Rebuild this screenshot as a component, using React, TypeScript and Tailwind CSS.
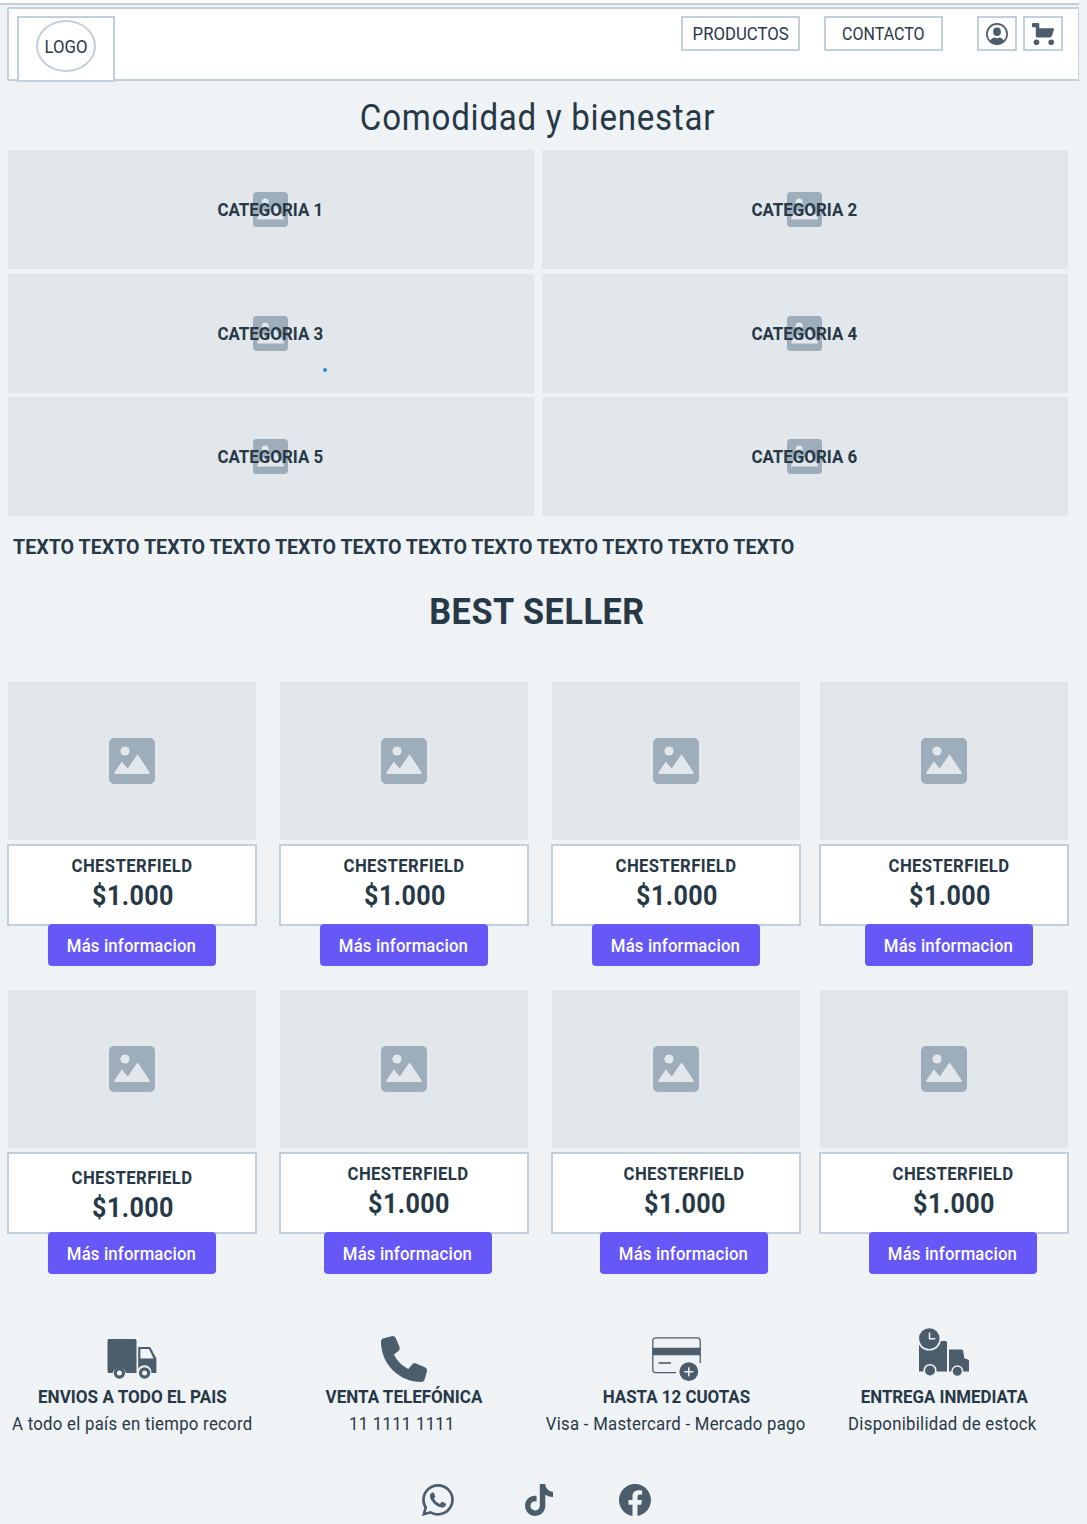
import type { ReactNode } from "react";
import { BsFacebook, BsWhatsapp } from "react-icons/bs";
import { FaPhone, FaTiktok } from "react-icons/fa6";

function PictureIcon({ className }: { className: string }) {
  return (
    <svg viewBox="0 0 46 46" className={className}>
      <rect width="46" height="46" rx="5" fill="#9dadba" />
      <circle cx="16" cy="13" r="4.6" fill="#e2e7eb" />
      <path d="M5.3 34.6 12.8 23.6 18.8 30.4 28.6 16.2 40.7 34.6 Q41 36 40 36 H6 Q5 36 5.3 34.6Z" fill="#e2e7eb" />
    </svg>
  );
}

function UserIcon() {
  return (
    <svg viewBox="0 0 22 22" className="size-[22px]">
      <circle cx="11" cy="11" r="10.1" fill="none" stroke="currentColor" strokeWidth="1.7" />
      <ellipse cx="11" cy="8.8" rx="3.9" ry="4.3" fill="currentColor" />
      <path d="M4 18.2 C5 15.6 7 14.8 8.4 14.6 Q11 16 13.6 14.6 C15 14.8 17 15.6 18 18.2 Q14.8 21.5 11 21.5 T4 18.2Z" fill="currentColor" />
    </svg>
  );
}

function CartIcon() {
  return (
    <svg viewBox="0 0 22 22" className="size-[22px]" fill="currentColor">
      <path d="M1 0 H6 Q7.3 0 7.3 1.5 V5.2 H21 Q22.2 5.2 22 6.4 L20 12.7 Q19.5 14.4 17.8 14.4 H5.4 Q3.8 14.4 3.8 12.8 V4.2 H1 Q0 4.2 0 3.2 V1 Q0 0 1 0Z" />
      <circle cx="4.5" cy="19.2" r="2.8" />
      <circle cx="19.2" cy="19.2" r="2.8" />
    </svg>
  );
}

function TruckIcon() {
  return (
    <svg viewBox="0 0 50 40" className="h-10 w-[50px]" fill="currentColor">
      <path d="M1.5 0 H28 Q29.5 0 29.5 1.5 V34 H19 A7 7 0 0 0 5.6 34 H2 Q.5 34 .5 32.5 V1.5 Q.5 0 1.5 0Z" />
      <path fillRule="evenodd" d="M31.2 8 H43.2 L49.4 19.5 V34 H44.4 A7 7 0 0 0 31.2 30Z M33.4 10 V19.4 H46.6 L42 10Z" />
      <circle cx="12.4" cy="34" r="4.1" fill="none" stroke="currentColor" strokeWidth="3.2" />
      <circle cx="37.6" cy="34" r="4.1" fill="none" stroke="currentColor" strokeWidth="3.2" />
    </svg>
  );
}

function CardIcon() {
  return (
    <svg viewBox="0 0 50 45" className="h-[45px] w-[50px]" fill="none" stroke="currentColor">
      <path d="M24 35.7 H4 Q.8 35.7 .8 32.5 V4 Q.8 .8 4 .8 H45 Q48.2 .8 48.2 4 V26" strokeWidth="1.3" />
      <path d="M.8 14.5 H48.2" strokeWidth="7.6" />
      <path d="M6.5 26 H19" strokeWidth="1.6" />
      <circle cx="36.8" cy="34.7" r="9.4" fill="currentColor" stroke="none" />
      <path d="M32.3 34.7 H41.3 M36.8 30.2 V39.2" stroke="#eff3f6" strokeWidth="1.5" />
    </svg>
  );
}

function FastTruckIcon() {
  return (
    <svg viewBox="0 0 50 48" className="h-12 w-[50px]" fill="currentColor">
      <path d="M0 15 H19 V13 H26.5 Q28 13 28 14.5 V43.5 H0Z" />
      <path d="M30 21.5 H42.5 Q44 21.5 44.2 23 L45.3 30.3 L49 31.6 Q50 32 50 33 V43.5 H30Z" />
      <circle cx="10.3" cy="10.8" r="11.8" fill="#eff3f6" />
      <circle cx="10.3" cy="10.6" r="10.3" />
      <path d="M10.5 4.5 V10.8 H16.3" fill="none" stroke="#eff3f6" strokeWidth="1.5" />
      <circle cx="11" cy="42.5" r="6.6" fill="#eff3f6" />
      <circle cx="11" cy="42.5" r="5" />
      <circle cx="38.3" cy="43.2" r="6" fill="#eff3f6" />
      <circle cx="38.3" cy="43.2" r="4.5" />
    </svg>
  );
}

function NavBox({ className, children }: { className: string; children: ReactNode }) {
  return (
    <div className={`flex h-[35px] shrink-0 items-center justify-center border-2 border-[#c3cfda] bg-white text-[#4b5d6b] ${className}`}>
      {children}
    </div>
  );
}

function Category({ n }: { n: number }) {
  return (
    <div className="grid h-[119px] place-items-center bg-[#e2e7eb] pr-px">
      <PictureIcon className="col-start-1 row-start-1 size-[35px]" />
      <span className="col-start-1 row-start-1 scale-x-[0.94] text-lg leading-[19px] font-bold whitespace-nowrap">CATEGORIA {n}</span>
    </div>
  );
}

type Shift = { text: string; button: string };

function Product({ shift }: { shift: Shift }) {
  return (
    <article className="w-[248px]">
      <div className="flex h-[158px] items-center justify-center bg-[#e2e7eb]">
        <PictureIcon className="size-[46px]" />
      </div>
      <div className="-mx-px mt-1 h-[82px] border-2 border-[#c3cfda] bg-white">
        <div className={`flex flex-col items-center ${shift.text}`}>
          <h3 className="scale-x-[0.93] text-lg leading-5 font-bold tracking-[0.4px]">CHESTERFIELD</h3>
          <p className="mt-[5px] scale-x-[0.93] text-[27px] leading-[30px] font-bold tracking-[0.45px]">$1.000</p>
        </div>
      </div>
      <button className={`relative -mt-0.5 block h-[42px] w-[168px] rounded-[4px] bg-[#6658f6] pt-0.5 pr-px text-lg font-medium text-white ${shift.button}`}>
        <span className="inline-block scale-x-[0.93] tracking-[0.17px] whitespace-nowrap">Más informacion</span>
      </button>
    </article>
  );
}

const firstRow: Shift[] = [
  { text: "pt-2.5 pl-px", button: "ml-10" },
  { text: "pt-2.5 pl-px", button: "ml-10" },
  { text: "pt-2.5 pl-px", button: "ml-10" },
  { text: "pt-2.5 pl-[11px]", button: "ml-[45px]" },
];

const secondRow: Shift[] = [
  { text: "pt-3.5 pl-px", button: "ml-10" },
  { text: "pt-2.5 pl-[9px]", button: "ml-11" },
  { text: "pt-2.5 pl-[17px]", button: "ml-12" },
  { text: "pt-2.5 pl-[19px]", button: "ml-[49px]" },
];

function ProductRow({ items }: { items: Shift[] }) {
  return (
    <div className="ml-2 grid grid-cols-[272px_272px_268px_248px]">
      {items.map((shift, i) => (
        <Product key={i} shift={shift} />
      ))}
    </div>
  );
}

function Benefit({ icon, title, detail, titleClass, detailClass }: { icon: ReactNode; title: string; detail: string; titleClass: string; detailClass: string }) {
  return (
    <div className="flex w-[248px] flex-col items-center">
      <div className="h-[59px] text-[#4b5d6b]">{icon}</div>
      <h3 className={`text-lg leading-5 font-bold whitespace-nowrap ${titleClass}`}>{title}</h3>
      <p className={`mt-[7px] scale-x-[0.93] text-lg leading-5 tracking-[0.3px] whitespace-nowrap ${detailClass}`}>{detail}</p>
    </div>
  );
}

export default function App() {
  return (
    <div className="h-[1524px] w-[1087px] overflow-hidden bg-[#eff3f6] font-['Roboto',sans-serif] text-[#273846]">
      <div className="h-[5px] w-[1079px] border-b-2 border-[#c3cfda] bg-white" />
      <header className="mt-0.5 ml-[7px] flex h-[74px] w-[1072px] items-start border-2 border-r border-[#c3cfda] bg-white pt-[7px] pl-2">
        <div className="h-[66px] w-[98px] shrink-0 border-2 border-[#c3cfda] bg-white pt-0.5 pl-[17px]">
          <div className="flex h-[52px] w-[60px] items-center justify-center rounded-[50%] border-2 border-[#c3cfda] pt-0.5 pl-px">
            <span className="scale-x-[0.93] text-lg">LOGO</span>
          </div>
        </div>
        <nav className="ml-[566px] flex">
          <NavBox className="w-[119px]">
            <span className="scale-x-[0.93] text-lg text-[#273846]">PRODUCTOS</span>
          </NavBox>
          <NavBox className="ml-6 w-[119px]">
            <span className="scale-x-[0.89] text-lg text-[#273846]">CONTACTO</span>
          </NavBox>
          <NavBox className="ml-[34px] w-10">
            <UserIcon />
          </NavBox>
          <NavBox className="ml-1.5 w-10">
            <CartIcon />
          </NavBox>
        </nav>
      </header>

      <h1 className="h-[69px] w-[1075px] scale-x-[0.92] pt-[5px] text-center text-4xl leading-[65px] tracking-[0.8px]">Comodidad y bienestar</h1>

      <section className="ml-2 grid w-[1060px] grid-cols-2 gap-x-2 gap-y-[4.5px]">
        {[1, 2, 3, 4, 5, 6].map((n) => (
          <div key={n} className="relative">
            <Category n={n} />
            {n === 3 && <i className="absolute top-[94px] left-[315px] size-1 rounded-full bg-[#2e86de]" />}
          </div>
        ))}
      </section>

      <p className="mt-[17px] ml-[13px] origin-left scale-x-[0.935] text-[21px] leading-[28px] font-bold whitespace-nowrap">
        TEXTO TEXTO TEXTO TEXTO TEXTO TEXTO TEXTO TEXTO TEXTO TEXTO TEXTO TEXTO
      </p>
      <h2 className="mt-[31px] w-[1074px] scale-x-[0.95] text-center text-4xl leading-10 font-bold tracking-[0.6px]">BEST SELLER</h2>

      <section className="mt-[50px] flex flex-col gap-6">
        <ProductRow items={firstRow} />
        <ProductRow items={secondRow} />
      </section>

      <section className="mt-[54px] ml-2 grid grid-cols-[272px_272px_268px_248px]">
        <Benefit icon={<div className="pt-[11px]"><TruckIcon /></div>} title="ENVIOS A TODO EL PAIS" detail="A todo el país en tiempo record" titleClass="scale-x-[0.95]" detailClass="" />
        <Benefit icon={<div className="pt-2"><FaPhone className="size-[46px]" /></div>} title="VENTA TELEFÓNICA" detail="11 1111 1111" titleClass="scale-x-[0.945]" detailClass="relative -left-0.5" />
        <Benefit icon={<div className="pt-[9px] pl-px"><CardIcon /></div>} title="HASTA 12 CUOTAS" detail="Visa - Mastercard - Mercado pago" titleClass="scale-x-[0.94]" detailClass="" />
        <Benefit icon={<FastTruckIcon />} title="ENTREGA INMEDIATA" detail="Disponibilidad de estock" titleClass="scale-x-[0.935]" detailClass="relative -left-0.5" />
      </section>

      <footer className="mt-[50px] ml-[422px] flex text-[#4b5d6b]">
        <BsWhatsapp className="size-8" />
        <FaTiktok className="ml-[71px] h-8 w-7" />
        <BsFacebook className="ml-[66px] size-8" />
      </footer>
    </div>
  );
}
